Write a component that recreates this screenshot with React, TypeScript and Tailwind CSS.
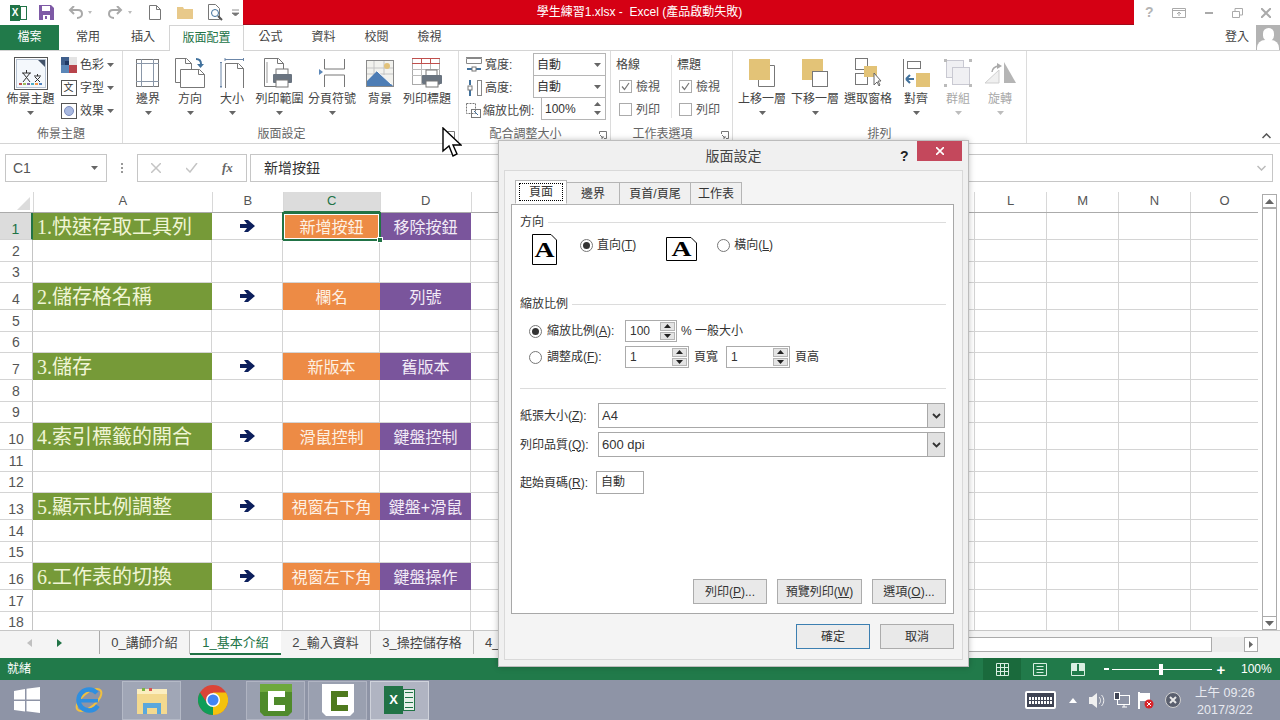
import type { ReactNode } from "react"

const FONT = "font-['Liberation_Sans','Noto_Sans_CJK_TC',sans-serif]"

const colWidths = [179, 71, 97, 91, 72, 72, 72, 72, 72, 72, 72, 72, 72, 72, 68]
const colNames = ["A", "B", "C", "D", "E", "F", "G", "H", "I", "J", "K", "L", "M", "N", "O"]
// E to K sit behind the dialog
const hiddenCols = ["E", "F", "G", "H", "I", "J", "K"]

// row number -> [A, C, D]
const sections: Record<number, string[]> = {
  1: ["1.快速存取工具列", "新增按鈕", "移除按鈕"],
  4: ["2.儲存格名稱", "欄名", "列號"],
  7: ["3.儲存", "新版本", "舊版本"],
  10: ["4.索引標籤的開合", "滑鼠控制", "鍵盤控制"],
  13: ["5.顯示比例調整", "視窗右下角", "鍵盤+滑鼠"],
  16: ["6.工作表的切換", "視窗左下角", "鍵盤操作"],
}

const rowHeight = (n: number) => (n % 3 === 1 ? 27 : n % 3 === 2 ? 22 : 21)

function Caret({ light }: { light?: boolean }) {
  return (
    <svg width="7" height="4" viewBox="0 0 7 4" className="shrink-0">
      <path d="M0 0h7L3.500 4z" fill={light ? "#bdbdbd" : "#666"} />
    </svg>
  )
}

function Large({ w, label, icon, dim, noCaret }: { w: number; label: string; icon: ReactNode; dim?: boolean; noCaret?: boolean }) {
  return (
    <div className="flex flex-col items-center pt-[3px]" style={{ width: w }}>
      <div className="h-[38px] flex items-center justify-center">{icon}</div>
      <div className={`h-[14px] leading-[14px] text-[12px] whitespace-nowrap ${dim ? "text-[#a8a8a8]" : "text-[#444]"}`}>{label}</div>
      {!noCaret && (
        <div className="h-[14px] flex items-center">
          <Caret light={dim} />
        </div>
      )}
    </div>
  )
}

function Group({ label, width, children, launcher }: { label: string; width: number; children: ReactNode; launcher?: boolean }) {
  return (
    <div className="relative flex flex-col h-full border-r border-[#dcdcdc]" style={{ width }}>
      <div className="flex-1 flex min-h-0">{children}</div>
      <div className={`h-[19px] text-center text-[12px] leading-[20px] text-[#666] whitespace-nowrap ${launcher ? "pr-[18px]" : ""}`}>{label}</div>
      {launcher && (
        <svg width="8" height="8" viewBox="0 0 8 8" className="absolute right-[3px] bottom-[4px]">
          <path d="M.5 3V.5h7v7H5M1 4l3 3M4 5v2H2" fill="none" stroke="#777" />
        </svg>
      )}
    </div>
  )
}

function Page({ x, y, w, h }: { x: number; y: number; w: number; h: number }) {
  return <path d={`M${x + .5} ${y + .5}h${w - 6}l5 5v${h - 5}h-${w - 1}z M${x + w - 6.5} ${y + .5}v5h6`} fill="#fff" stroke="#777" />
}

const icons = {
  theme: (
    <svg width="34" height="33" viewBox="0 0 34 33">
      <rect x=".5" y=".5" width="33" height="32" fill="#fff" stroke="#555" />
      <rect x="2.5" y="2.5" width="29" height="28" fill="#f4f8fc" stroke="#b8c4d4" />
      <path d="M24 3h7v7z" fill="#44546a" />
      <path d="M8 16h9M12.5 13v3M9 16l7 9M16 16l-7 9M20 19h7M23.5 17v2M21 20l5 5M26 20l-5 5" stroke="#333" fill="none" />
      <path d="M5 26h3v2H5z" fill="#c0504d" /><path d="M9 26h3v2H9z" fill="#9bbb59" /><path d="M13 26h3v2h-3z" fill="#8064a2" />
      <path d="M17 26h3v2h-3z" fill="#4bacc6" /><path d="M21 26h3v2h-3z" fill="#f79646" /><path d="M25 26h3v2h-3z" fill="#4f81bd" />
    </svg>
  ),
  margins: (
    <svg width="24" height="28" viewBox="0 0 24 28" fill="none" stroke="#777">
      <rect x=".5" y=".5" width="22" height="27" />
      <path d="M5.500 0v28M17.500 0v28M0 4.500h23M0 22.500h23" stroke="#8a97a8" />
    </svg>
  ),
  orient: (
    <svg width="30" height="30" viewBox="0 0 30 30">
      <Page x={0} y={0} w={17} h={24} />
      <Page x={5} y={11} w={25} h={18} />
      <path d="M21 1c3 0 5 2 5 5" fill="none" stroke="#41719c" strokeWidth="2" />
      <path d="M22 6h7l-3.500 4z" fill="#41719c" />
    </svg>
  ),
  size: (
    <svg width="24" height="30" viewBox="0 0 24 30">
      <path d="M5 1.500h19M5 0v3M23.500 0v3M1 4v26M0 4.500h2M0 28.500h2" stroke="#6b86a8" fill="none" />
      <Page x={5} y={5} w={19} h={25} />
    </svg>
  ),
  printArea: (
    <svg width="31" height="30" viewBox="0 0 31 30">
      <Page x={0} y={0} w={20} h={28} />
      <path d="M3 4v21" stroke="#999" />
      <rect x="12" y="11" width="12" height="6" fill="#fff" stroke="#777" />
      <rect x="9" y="16" width="19" height="9" rx="1" fill="#6a7480" />
      <rect x="12" y="22" width="12" height="7" fill="#fff" stroke="#777" />
    </svg>
  ),
  breaks: (
    <svg width="26" height="30" viewBox="0 0 26 30" fill="none" stroke="#777">
      <path d="M5.500 1v10h20V1M5.500 29V17h20v12" />
      <path d="M0 11l4 3-4 3z" fill="#5b87b8" stroke="none" />
    </svg>
  ),
  background: (
    <svg width="28" height="27" viewBox="0 0 28 27">
      <rect x=".5" y=".5" width="27" height="26" fill="#f2f2ee" stroke="#8a8a8a" />
      <path d="M1 8h26M1 14h26M8 1v14M18 1v14" stroke="#c4c4c4" />
      <circle cx="21" cy="6" r="3" fill="#e2c27a" />
      <path d="M1 26v-5l10-10 12 11 4 4z" fill="#4d7db5" />
      <path d="M11 11l14 13" stroke="#fff" />
    </svg>
  ),
  printTitles: (
    <svg width="31" height="30" viewBox="0 0 31 30">
      <rect x=".5" y=".5" width="27" height="26" fill="#fff" stroke="#aaa" />
      <path d="M0 .5h28M0 5.500h28M9.500 0v6M18.500 0v6" stroke="#c0504d" />
      <path d="M0 11.500h28M0 17.500h28M9.500 6v21M18.500 6v21" stroke="#bbb" />
      <rect x="14" y="12" width="11" height="6" fill="#fff" stroke="#777" />
      <rect x="10" y="17" width="20" height="9" rx="1" fill="#6a7480" />
      <rect x="14" y="23" width="12" height="6" fill="#fff" stroke="#777" />
    </svg>
  ),
  forward: (
    <svg width="26" height="28" viewBox="0 0 26 28">
      <path d="M21 6.500h4.500v21h-16V21" fill="none" stroke="#777" />
      <rect x="0" y="0" width="21" height="21" fill="#e3c377" />
    </svg>
  ),
  backward: (
    <svg width="26" height="28" viewBox="0 0 26 28">
      <rect x="0" y="0" width="21" height="21" fill="#e3c377" />
      <rect x="10.500" y="12.500" width="15" height="15" fill="#fff" stroke="#777" />
    </svg>
  ),
  pane: (
    <svg width="27" height="30" viewBox="0 0 27 30">
      <rect x=".5" y=".5" width="12" height="11" fill="#fff" stroke="#777" />
      <rect x=".5" y="15.500" width="12" height="11" fill="#fff" stroke="#777" />
      <rect x="9" y="8" width="13" height="11" fill="#e3c377" />
      <path d="M19 15v12l3-3 2 4 1-1-2-4h3z" fill="#fff" stroke="#666" />
    </svg>
  ),
  align: (
    <svg width="27" height="28" viewBox="0 0 27 28">
      <path d="M.5 0v28" stroke="#777" />
      <rect x="4.500" y="2.500" width="13" height="7" fill="#fff" stroke="#777" />
      <rect x="13" y="14" width="14" height="14" fill="#e3c377" />
      <path d="M3 20h8M3 20l4-4M3 20l4 4" stroke="#41719c" strokeWidth="2" fill="none" />
    </svg>
  ),
  group: (
    <svg width="28" height="28" viewBox="0 0 28 28" fill="none" stroke="#c9c9d2">
      <rect x="2.500" y="1.500" width="17" height="17" fill="#f0f0f3" />
      <rect x="8.500" y="8.500" width="17" height="17" fill="#f0f0f3" />
      <path d="M0 0h3v3H0zM25 0h3v3h-3zM0 25h3v3H0zM25 25h3v3h-3z" fill="#bbb" stroke="none" />
    </svg>
  ),
  rotate: (
    <svg width="31" height="22" viewBox="0 0 31 22">
      <path d="M0 21l14-13v13z" fill="#f0f0f0" stroke="#cfcfcf" />
      <path d="M19 0l12 21H19z" fill="#b5b5b5" />
      <path d="M7 10c0-3 3-6 7-6" fill="none" stroke="#aaa" strokeWidth="1.500" />
      <path d="M12 1l5 3-5 3z" fill="#aaa" />
    </svg>
  ),
}

function SmallRow({ icon, label }: { icon: ReactNode; label: string }) {
  return (
    <div className="h-[23px] flex items-center gap-[3px]">
      <div className="w-[17px] h-[17px] flex items-center justify-center">{icon}</div>
      <span className="text-[12px] text-[#444]">{label}</span>
      <Caret />
    </div>
  )
}

function Combo({ w, value, spin }: { w: number; value: string; spin?: boolean }) {
  return (
    <div className="h-[23px] bg-white border border-[#b5b5b5] flex items-center justify-between pl-[3px] pr-[4px] text-[12px] text-[#333] -mt-px first:mt-0" style={{ width: w }}>
      <span>{value}</span>
      {spin ? (
        <svg width="7" height="15" viewBox="0 0 7 15">
          <path d="M0 5h7L3.500 1zM0 10h7l-3.500 4z" fill="#666" />
        </svg>
      ) : (
        <Caret />
      )}
    </div>
  )
}

function Check({ on, label }: { on?: boolean; label: string }) {
  return (
    <div className="h-[23px] flex items-center gap-[4px] text-[12px] text-[#555]">
      <div className="w-[13px] h-[13px] border border-[#ababab] bg-white flex items-center justify-center">
        {on && (
          <svg width="9" height="9" viewBox="0 0 9 9">
            <path d="M1 4.500l2.500 3L8 1" fill="none" stroke="#777" strokeWidth="1.200" />
          </svg>
        )}
      </div>
      {label}
    </div>
  )
}

function Ribbon() {
  return (
    <div className="h-[94px] shrink-0 bg-white border-y border-[#d4d4d4] flex">
      <Group label="佈景主題" width={123}>
        <div className="pl-[4px]">
          <Large w={53} label="佈景主題" icon={icons.theme} />
        </div>
        <div className="pl-[3px] pt-[2px]">
          <SmallRow
            label="色彩"
            icon={
              <svg width="16" height="16" viewBox="0 0 16 16">
                <path d="M0 0h8v8H0z" fill="#3f5f8c" /><path d="M8 0h8v8H8z" fill="#e4e4e4" />
                <path d="M0 8h8v8H0z" fill="#5b87b8" /><path d="M8 8h8v8H8z" fill="#b8444c" />
                <path d="M4 4h4v4H4z" fill="#1f3864" />
              </svg>
            }
          />
          <SmallRow
            label="字型"
            icon={
              <div className="w-[16px] h-[16px] border border-[#555] text-[10px] leading-[14px] text-center text-[#333] bg-white">文</div>
            }
          />
          <SmallRow
            label="效果"
            icon={
              <div className="w-[16px] h-[16px] border border-[#555] bg-white flex items-center justify-center">
                <div className="w-[10px] h-[10px] rounded-full bg-[#a9b9e0] border border-[#7f8fc0]" />
              </div>
            }
          />
        </div>
      </Group>
      <Group label="版面設定" width={336} launcher>
        <div className="w-[4px]" />
        <Large w={42} label="邊界" icon={icons.margins} />
        <Large w={42} label="方向" icon={icons.orient} />
        <Large w={42} label="大小" icon={icons.size} />
        <Large w={53} label="列印範圍" icon={icons.printArea} />
        <Large w={52} label="分頁符號" icon={icons.breaks} />
        <Large w={44} label="背景" icon={icons.background} noCaret />
        <Large w={50} label="列印標題" icon={icons.printTitles} noCaret />
      </Group>
      <Group label="配合調整大小" width={152} launcher>
        <div className="flex w-full pl-[7px] pt-[2px]">
          <div className="w-[67px]">
            <div className="h-[23px] flex items-center gap-[2px] text-[12px] text-[#444]">
              <svg width="17" height="16" viewBox="0 0 17 16" fill="none">
                <path d="M.5 1.500h15v5h-15zM0 .5h16" stroke="#888" />
                <path d="M1 12h5M10 12h5" stroke="#41719c" strokeWidth="2" /><rect x="6" y="10" width="4" height="4" stroke="#777" />
              </svg>
              寬度:
            </div>
            <div className="h-[23px] flex items-center gap-[2px] text-[12px] text-[#444]">
              <svg width="17" height="16" viewBox="0 0 17 16" fill="none">
                <rect x="11.500" y=".5" width="4" height="15" stroke="#888" />
                <path d="M4 0v5M4 10v6" stroke="#41719c" strokeWidth="2" /><rect x="2" y="6" width="4" height="4" stroke="#777" />
              </svg>
              高度:
            </div>
            <div className="h-[23px] flex items-center gap-[2px] text-[12px] text-[#444] whitespace-nowrap">
              <svg width="15" height="15" viewBox="0 0 15 15" fill="none" className="shrink-0">
                <rect x=".5" y=".5" width="9" height="10" stroke="#777" strokeDasharray="2 1" />
                <rect x="5.500" y="6.500" width="9" height="8" stroke="#777" />
                <path d="M8 8l4 4" stroke="#41719c" />
              </svg>
              縮放比例:
            </div>
          </div>
          <div className="flex flex-col items-end">
            <Combo w={73} value="自動" />
            <Combo w={73} value="自動" />
            <Combo w={65} value="100%" spin />
          </div>
        </div>
      </Group>
      <Group label="工作表選項" width={122} launcher>
        <div className="flex pl-[6px] pt-[4px] w-full">
          <div className="w-[55px] border-r border-[#e2e2e2] mb-[6px]">
            <div className="h-[20px] text-[12px] leading-[20px] text-[#444] -ml-[1px]">格線</div>
            <div className="pl-[2px]"><Check on label="檢視" /><Check label="列印" /></div>
          </div>
          <div className="pl-[5px]">
            <div className="h-[20px] text-[12px] leading-[20px] text-[#444]">標題</div>
            <div className="pl-[2px]"><Check on label="檢視" /><Check label="列印" /></div>
          </div>
        </div>
      </Group>
      <Group label="排列" width={294}>
        <div className="w-[3px]" />
        <Large w={52} label="上移一層" icon={icons.forward} />
        <Large w={54} label="下移一層" icon={icons.backward} />
        <Large w={52} label="選取窗格" icon={icons.pane} noCaret />
        <Large w={44} label="對齊" icon={icons.align} />
        <Large w={40} label="群組" icon={icons.group} dim />
        <Large w={44} label="旋轉" icon={icons.rotate} dim />
      </Group>
      <div className="flex-1 flex items-end justify-end pr-[9px] pb-[4px]">
        <svg width="9" height="6" viewBox="0 0 9 6">
          <path d="M.5 5l4-4 4 4" fill="none" stroke="#555" strokeWidth="1.500" />
        </svg>
      </div>
    </div>
  )
}

function TitleBar() {
  return (
    <div className="h-[25px] shrink-0 flex bg-white">
      <div className="w-[243px] flex items-center relative">
        <div className="ml-[10px] w-[17px] h-[16px] flex">
          <div className="w-[10px] h-[16px] bg-[#217346] text-white text-[10px] font-bold leading-[16px] text-center">X</div>
          <div className="w-[7px] h-[14px] mt-[1px] border border-[#217346] bg-white" />
        </div>
        <svg width="15" height="15" viewBox="0 0 15 15" className="ml-[12px]">
          <path d="M0 0h12l3 3v12H0z" fill="#7e5aa6" /><path d="M3 1h8v5H3z" fill="#fff" /><path d="M4 10h7v5H4z" fill="#fff" /><path d="M6 11h2v3H6z" fill="#7e5aa6" />
        </svg>
        <svg width="15" height="13" viewBox="0 0 15 13" className="ml-[14px]" fill="none" stroke="#a9a9a9" strokeWidth="2">
          <path d="M3 4h7c3 0 4 2 4 4s-2 4-5 4" /><path d="M6 0L2 4l4 4" />
        </svg>
        <svg width="4" height="3" viewBox="0 0 4 3" className="ml-[5px]"><path d="M0 0h4L2 3z" fill="#bbb" /></svg>
        <svg width="15" height="13" viewBox="0 0 15 13" className="ml-[16px]" fill="none" stroke="#a9a9a9" strokeWidth="2">
          <path d="M12 4H5C2 4 1 6 1 8s2 4 5 4" /><path d="M9 0l4 4-4 4" />
        </svg>
        <svg width="4" height="3" viewBox="0 0 4 3" className="ml-[5px]"><path d="M0 0h4L2 3z" fill="#bbb" /></svg>
        <svg width="12" height="15" viewBox="0 0 12 15" className="ml-[17px]">
          <path d="M.5.5h7l4 4v10H.5zM7.500.5v4h4" fill="#fff" stroke="#777" />
        </svg>
        <svg width="17" height="13" viewBox="0 0 17 13" className="ml-[16px]">
          <path d="M0 1h6l1 2h9v10H0z" fill="#e8c98a" />
        </svg>
        <svg width="15" height="17" viewBox="0 0 15 17" className="ml-[14px]" fill="none">
          <path d="M.5.5h7l4 4v11H.5z" stroke="#777" /><circle cx="7" cy="9" r="3.500" stroke="#41719c" /><path d="M10 12l4 4" stroke="#555" strokeWidth="2" />
        </svg>
        <svg width="7" height="7" viewBox="0 0 7 7" className="ml-[9px]"><path d="M0 1h7M0 4h7L3.500 7z" stroke="#777" fill="#777" strokeWidth=".8" /></svg>
      </div>
      <div className="w-[891px] bg-[#d50014] border-b border-[#a00a1a] text-white text-[12px] leading-[24px] text-center pr-[98px] whitespace-pre">學生練習1.xlsx -  Excel (產品啟動失敗)</div>
      <div className="flex-1 flex items-center text-[#b4b4b4]">
        <span className="ml-[11px] w-[10px] text-[14px] font-bold">?</span>
        <svg width="14" height="10" viewBox="0 0 14 10" className="ml-[17px]" fill="none" stroke="#aaa"><path d="M.5.5h13v9H.5zM0 2.500h14M7 8V4M5 6l2-2 2 2" /></svg>
        <div className="ml-[19px] w-[8px] h-[2px] bg-[#aaa]" />
        <svg width="11" height="10" viewBox="0 0 11 10" className="ml-[19px]" fill="none" stroke="#aaa"><path d="M.5 3.500h7v6h-7zM3 3V.5h7.500V7H8" /></svg>
        <svg width="10" height="10" viewBox="0 0 10 10" className="ml-[18px]" fill="none" stroke="#aaa" strokeWidth="2"><path d="M0 0l10 10M10 0L0 10" /></svg>
      </div>
    </div>
  )
}

function Tabs() {
  const tab = "text-[12px] text-[#444] text-center leading-[25px]"
  return (
    <div className="h-[26px] shrink-0 flex bg-transparent relative -mb-px z-10">
      <div className="w-[59px] h-[25px] bg-[#217a4a] text-white text-[12px] text-center leading-[25px]">檔案</div>
      <div className={`w-[58px] ${tab}`}>常用</div>
      <div className={`w-[52px] ${tab}`}>插入</div>
      <div className="w-[75px] bg-white border-x border-t border-[#d4d4d4] text-[#217346] text-[12px] text-center leading-[24px]">版面配置</div>
      <div className={`w-[53px] ${tab}`}>公式</div>
      <div className={`w-[53px] ${tab}`}>資料</div>
      <div className={`w-[53px] ${tab}`}>校閱</div>
      <div className={`w-[53px] ${tab}`}>檢視</div>
      <div className="flex-1" />
      <div className="text-[12px] text-[#444] leading-[25px] mr-[7px]">登入</div>
      <div className="w-[24px] h-[25px] bg-[#b3b3b3] overflow-hidden flex flex-col items-center">
        <div className="w-[11px] h-[13px] mt-[3px] rounded-full bg-white shrink-0" />
        <div className="w-[22px] h-[12px] -mt-[1px] rounded-t-[8px] bg-white shrink-0" />
      </div>
    </div>
  )
}

function FormulaBar() {
  return (
    <div className="h-[48px] shrink-0 bg-white pt-[10px] pl-[5px] flex text-[#444]">
      <div className="w-[102px] h-[28px] border border-[#c6c6c6] flex items-center justify-between pl-[7px] pr-[8px] text-[14px] text-[#555]">
        C1
        <Caret />
      </div>
      <div className="w-[30px] flex flex-col items-center justify-center gap-[2px] h-[28px]">
        <div className="w-[2px] h-[2px] bg-[#999]" /><div className="w-[2px] h-[2px] bg-[#999]" /><div className="w-[2px] h-[2px] bg-[#999]" />
      </div>
      <div className="w-[110px] h-[28px] border border-[#c6c6c6] flex items-center pl-[13px] mr-[3px]">
        <svg width="10" height="10" viewBox="0 0 10 10" stroke="#c4c4c4" strokeWidth="1.500" fill="none"><path d="M0 0l10 10M10 0L0 10" /></svg>
        <svg width="12" height="10" viewBox="0 0 12 10" stroke="#c4c4c4" strokeWidth="1.500" fill="none" className="ml-[25px]"><path d="M0 5l4 4 7-9" /></svg>
        <span className="ml-[24px] text-[13px] italic font-bold font-['Liberation_Serif'] text-[#666]">fx</span>
      </div>
      <div className="w-[1023px] h-[28px] border border-[#c6c6c6] flex items-center justify-between pl-[13px] pr-[6px] text-[14px] text-[#333]">
        新增按鈕
        <svg width="9" height="6" viewBox="0 0 9 6"><path d="M.5 1l4 4 4-4" fill="none" stroke="#bbb" strokeWidth="1.500" /></svg>
      </div>
    </div>
  )
}

function NavyArrow() {
  return (
    <svg width="15" height="12" viewBox="0 0 15 12">
      <path d="M0 4h7L4 0h4l7 6-7 6H4l3-4H0z" fill="#0c1f5c" />
    </svg>
  )
}

function Grid() {
  const rows = Array.from({ length: 18 }, (_, i) => i + 1)
  return (
    <div className="flex-1 min-h-0 flex bg-white overflow-hidden">
      <div className="w-[1258px] shrink-0 overflow-hidden">
        <div className="h-[21px] flex border-b border-[#ababab]">
          <div className="w-[33px] flex items-end justify-end pr-[3px] pb-[2px]">
            <svg width="13" height="13" viewBox="0 0 13 13"><path d="M13 0v13H0z" fill="#dcdcdc" /></svg>
          </div>
          {colNames.map((c, i) => (
            <div
              key={c}
              style={{ width: colWidths[i] }}
              className={`text-center text-[13px] leading-[18px] text-[#555] border-l border-[#d8d8d8] ${c === "C" ? "bg-[#dcdcdc] text-[#217346] border-b-2 border-b-[#217346] h-[21px]" : ""}`}
            >
              {hiddenCols.includes(c) ? null : c}
            </div>
          ))}
        </div>
        {rows.map((n) => {
          const sec = sections[n]
          return (
            <div key={n} className="flex" style={{ height: rowHeight(n) }}>
              <div className={`w-[33px] shrink-0 text-[14px] leading-[18px] text-center flex items-end justify-center pb-[1px] border-b border-[#d4d4d4] ${n === 1 ? "bg-[#dcdcdc] text-[#217346] border-r-2 border-r-[#217346]" : "text-[#555] border-r border-r-[#c4c4c4]"}`}>{n}</div>
              {colNames.map((c, i) => {
                const w = colWidths[i]
                const base = "shrink-0 border-b border-r border-[#d4d4d4] relative"
                if (sec && c === "A")
                  return (
                    <div key={c} style={{ width: w }} className="shrink-0 bg-[#769a38] text-[#f0f5d5] text-[20px] leading-[27px] pl-[4px] pt-[1px] whitespace-nowrap font-['Liberation_Serif','Noto_Sans_CJK_TC',serif] border-r border-[#769a38]">{sec[0]}</div>
                  )
                if (sec && c === "B")
                  return (
                    <div key={c} style={{ width: w }} className={`${base} flex items-center justify-center`}><NavyArrow /></div>
                  )
                if (sec && c === "C")
                  return (
                    <div key={c} style={{ width: w }} className="shrink-0 relative bg-[#ed8b45] text-[#fdf1e4] text-[16px] leading-[27px] pt-[1px] text-center whitespace-nowrap">
                      {sec[1]}
                      {n === 1 && (
                        <>
                          <div className="absolute -left-px -top-px -right-px -bottom-px border-2 border-[#217346] outline outline-1 -outline-offset-3 outline-white" />
                          <div className="absolute -right-[3px] -bottom-[3px] w-[6px] h-[6px] bg-[#217346] border border-white z-10" />
                        </>
                      )}
                    </div>
                  )
                if (sec && c === "D")
                  return (
                    <div key={c} style={{ width: w }} className="shrink-0 bg-[#7a559c] text-[#f3ecf7] text-[16px] leading-[27px] pt-[1px] text-center whitespace-nowrap">{sec[2]}</div>
                  )
                return <div key={c} style={{ width: w }} className={base} />
              })}
            </div>
          )
        })}
      </div>
      <div className="flex-1 pl-[4px] pr-[3px] pt-[2px] flex flex-col">
        <div className="flex-1 border border-[#ababab] flex flex-col justify-between">
          <div className="h-[14px] border-b-2 border-[#ababab] flex items-center justify-center">
            <svg width="9" height="5" viewBox="0 0 9 5"><path d="M0 5h9L4.500 0z" fill="#666" /></svg>
          </div>
          <div className="h-[13px] border-t border-[#ababab] flex items-center justify-center">
            <svg width="9" height="5" viewBox="0 0 9 5"><path d="M0 0h9L4.500 5z" fill="#666" /></svg>
          </div>
        </div>
      </div>
    </div>
  )
}

function SheetTabs() {
  const tab = "h-[23px] leading-[24px] text-[13px] text-[#444] text-center whitespace-nowrap border-r border-[#bdbdbd]"
  return (
    <div className="h-[28px] shrink-0 bg-[#f4f4f4] border-t border-[#c6c6c6] flex">
      <div className="w-[100px] h-[23px] flex items-center border-r border-[#aaa]">
        <svg width="5" height="8" viewBox="0 0 5 8" className="ml-[27px]"><path d="M5 0v8L0 4z" fill="#c0c0c0" /></svg>
        <svg width="5" height="8" viewBox="0 0 5 8" className="ml-[25px]"><path d="M0 0v8l5-4z" fill="#217346" /></svg>
      </div>
      <div className={`w-[90px] ${tab}`}>0_講師介紹</div>
      <div className="w-[91px] h-[24px] leading-[24px] text-[13px] text-[#217346] text-center bg-white border-b-2 border-[#217346] whitespace-nowrap">1_基本介紹</div>
      <div className={`w-[90px] ${tab}`}>2_輸入資料</div>
      <div className={`w-[103px] ${tab}`}>3_操控儲存格</div>
      <div className="pl-[11px] h-[23px] leading-[24px] text-[13px] text-[#444] w-[494px]">4_</div>
      <div className="w-[244px] h-[15px] mt-[6px] bg-white border border-[#ababab]" />
      <div className="w-[32px] h-[15px] mt-[6px] bg-[#ececec]" />
      <div className="w-[14px] h-[15px] mt-[6px] bg-white border border-[#ababab] flex items-center justify-center">
        <svg width="4" height="7" viewBox="0 0 4 7"><path d="M0 0v7l4-3.500z" fill="#666" /></svg>
      </div>
    </div>
  )
}

function StatusBar() {
  return (
    <div className="h-[22px] shrink-0 bg-[#217a4a] text-white flex items-center">
      <div className="pl-[7px] text-[12px] w-[983px]">就緒</div>
      <div className="w-[38px] h-[22px] bg-[#1a6a3c] flex items-center justify-center">
        <svg width="13" height="13" viewBox="0 0 13 13" fill="none" stroke="#d9efe2"><path d="M.5.5h12v12H.5zM4.500 0v13M8.500 0v13M0 4.500h13M0 8.500h13" /></svg>
      </div>
      <svg width="14" height="13" viewBox="0 0 14 13" fill="none" stroke="#d9efe2" className="ml-[12px]"><path d="M.5.5h13v12H.5zM3.500 3.500h7M3.500 6.500h7M3.500 9.500h7" /></svg>
      <svg width="14" height="13" viewBox="0 0 14 13" className="ml-[24px]"><path d="M.5.5h13v12H.5z" fill="none" stroke="#d9efe2" /><path d="M1 1h5v7H1zM8 1h5v7H8z" fill="#d9efe2" /></svg>
      <div className="ml-[19px] w-[5px] h-[2px] bg-white" />
      <div className="ml-[3px] w-[100px] h-[1px] bg-white relative">
        <div className="absolute left-[47px] -top-[5px] w-[4px] h-[11px] bg-white" />
      </div>
      <div className="ml-[3px] text-[15px] font-bold leading-none w-[12px] text-center">+</div>
      <div className="ml-[14px] text-[12px] font-['Liberation_Sans']">100%</div>
    </div>
  )
}

function Taskbar() {
  return (
    <div className="h-[40px] shrink-0 bg-[#8e94a6] flex items-center relative">
      <svg width="26" height="26" viewBox="0 0 26 26" className="ml-[14px]">
        <path d="M0 4l11-2v10.500H0zM12.500 1.800L26 0v12.500H12.500zM0 14h11v10.500L0 23zM12.500 14H26v12l-13.500-1.800z" fill="#fff" />
      </svg>
      <svg width="32" height="32" viewBox="0 0 32 32" className="ml-[33px]">
        <ellipse cx="16" cy="16" rx="15" ry="7" transform="rotate(-40 16 16)" fill="none" stroke="#f0c040" strokeWidth="2" />
        <circle cx="16" cy="16" r="10.500" fill="none" stroke="#2f8fe0" strokeWidth="4.500" strokeDasharray="52 14" strokeDashoffset="-6" />
        <path d="M7 15h18v3.500H7z" fill="#2f8fe0" />
      </svg>
      <div className="ml-[17px] w-[59px] h-[39px] bg-[#a0a6b6] border border-[#b4b9c6] flex items-center justify-center">
        <svg width="32" height="30" viewBox="0 0 32 30">
          <path d="M1 4h30v25H1z" fill="#f3d98f" /><path d="M1 4h30v5H1z" fill="#fbeec0" />
          <path d="M7 18h18v11h-4v-6H11v6H7z" fill="#5ba8dc" />
          <path d="M6 3h3v3H6z" fill="#7cb342" /><path d="M13 3h3v3h-3z" fill="#d9534f" />
        </svg>
      </div>
      <svg width="30" height="30" viewBox="0 0 30 30" className="ml-[17px]">
        <circle cx="15" cy="15" r="15" fill="#db4437" />
        <path d="M15 30a15 15 0 0 0 13-22.500H15z" fill="#f4c20d" />
        <path d="M15 30a15 15 0 0 1-13-22.500L9 18l6 4z" fill="#0f9d58" />
        <circle cx="15" cy="15" r="7" fill="#fff" />
        <circle cx="15" cy="15" r="5.500" fill="#4285f4" />
      </svg>
      <div className="ml-[18px] w-[59px] h-[39px] bg-[#9aa0b0] border border-[#b0b4c2] flex items-center justify-center">
        <svg width="32" height="32" viewBox="0 0 32 32">
          <path d="M0 0h32v28l-4 4H4l-4-4z" fill="#4f8a2a" /><path d="M0 0h32v8H0z" fill="#6ea83c" />
          <path d="M8 7h17v6H14v8h11v6H8z" fill="#fff" />
        </svg>
      </div>
      <div className="ml-[3px] w-[59px] h-[39px] bg-[#9aa0b0] border border-[#b0b4c2] flex items-center justify-center">
        <svg width="32" height="32" viewBox="0 0 32 32">
          <path d="M0 0h32v28l-4 4H4l-4-4z" fill="#fff" />
          <path d="M9 7h17v6H15v8h11v6H9z" fill="#4f7a1e" />
        </svg>
      </div>
      <div className="ml-[3px] w-[59px] h-[39px] bg-[#b0b4c2] border border-[#cfd2db] flex items-center justify-center">
        <div className="flex items-center">
          <div className="w-[19px] h-[28px] bg-[#217346] text-white text-[13px] font-bold leading-[28px] text-center">X</div>
          <div className="w-[12px] h-[22px] border border-[#217346] bg-[#e6efe9] flex flex-col justify-around px-[1px]">
            <div className="h-[1px] bg-[#217346]" /><div className="h-[1px] bg-[#217346]" /><div className="h-[1px] bg-[#217346]" /><div className="h-[1px] bg-[#217346]" />
          </div>
        </div>
      </div>
      <div className="ml-[596px] w-[31px] h-[18px] border-2 border-white rounded-[2px] bg-[#3f4454] flex flex-col justify-center gap-[1px] px-[2px]">
        <div className="h-[3px] bg-[repeating-linear-gradient(90deg,#fff_0_2px,transparent_2px_3px)]" />
        <div className="h-[3px] bg-[repeating-linear-gradient(90deg,#fff_0_2px,transparent_2px_3px)]" />
      </div>
      <svg width="8" height="5" viewBox="0 0 8 5" className="ml-[13px]"><path d="M0 5h8L4 0z" fill="#fff" /></svg>
      <svg width="16" height="15" viewBox="0 0 16 15" className="ml-[12px]">
        <path d="M0 4h3l5-4v15l-5-4H0z" fill="#f0f0f0" /><path d="M10 4c2 2 2 5 0 7M12.500 2c3 3 3 8 0 11" fill="none" stroke="#f0f0f0" />
      </svg>
      <svg width="16" height="16" viewBox="0 0 16 16" className="ml-[9px]" fill="none" stroke="#fff">
        <rect x="3.500" y="3.500" width="12" height="9" /><rect x=".5" y=".5" width="5" height="7" fill="#3f4454" /><path d="M8 15h5M10 12v3" />
      </svg>
      <svg width="16" height="17" viewBox="0 0 16 17" className="ml-[8px]">
        <path d="M1 0v17" stroke="#fff" strokeWidth="2" /><path d="M2 1h10v8H2z" fill="#fff" />
        <circle cx="11" cy="12" r="4.500" fill="#d8232a" /><path d="M9 10l4 4M13 10l-4 4" stroke="#fff" />
      </svg>
      <svg width="16" height="16" viewBox="0 0 16 16" className="ml-[11px]">
        <circle cx="8" cy="8" r="7.500" fill="#5a5f6e" stroke="#d0d0d0" /><path d="M5 5l6 6M11 5l-6 6" stroke="#e8e8e8" strokeWidth="2" />
      </svg>
      <div className="ml-[14px] pt-[3px] text-[12.500px] leading-[17px] text-[#e8eaf0] text-center whitespace-nowrap font-['Liberation_Sans','Noto_Sans_CJK_TC',sans-serif]">
        <div>上午 09:26</div>
        <div>2017/3/22</div>
      </div>
    </div>
  )
}

function U({ children }: { children: string }) {
  return <span className="underline">{children}</span>
}

function DlgTab({ w, label, active, first }: { w: number; label: string; active?: boolean; first?: boolean }) {
  return (
    <div
      className={`flex items-center justify-center text-[12px] text-[#333] border border-[#b5b5b5] whitespace-nowrap ${first ? "" : "border-l-0"} ${active ? "h-[24px] bg-white border-b-white z-10 -mt-[1px]" : "h-[23px] mt-[1px] bg-[#f0f0f0]"}`}
      style={{ width: w }}
    >
      {active ? <span className="border border-dotted border-black px-[9px] leading-[16px]">{label}</span> : label}
    </div>
  )
}

function Radio({ on }: { on?: boolean }) {
  return (
    <div className="w-[13px] h-[13px] rounded-full border border-[#777] bg-white flex items-center justify-center shrink-0">
      {on && <div className="w-[7px] h-[7px] rounded-full bg-[#333]" />}
    </div>
  )
}

function Spin({ w, value }: { w: number; value: string }) {
  return (
    <div className="h-[22px] bg-white border border-[#ababab] flex items-center justify-between pl-[4px] pr-[1px] text-[12px] text-[#333] shrink-0" style={{ width: w }}>
      {value}
      <div className="w-[15px] h-[18px] flex flex-col gap-[1px]">
        <div className="flex-1 bg-[#e4e4e4] border border-[#b5b5b5] flex items-center justify-center">
          <svg width="7" height="4" viewBox="0 0 7 4"><path d="M0 4h7L3.500 0z" fill="#222" /></svg>
        </div>
        <div className="flex-1 bg-[#e4e4e4] border border-[#b5b5b5] flex items-center justify-center">
          <svg width="7" height="4" viewBox="0 0 7 4"><path d="M0 0h7L3.500 4z" fill="#222" /></svg>
        </div>
      </div>
    </div>
  )
}

function Sel({ value }: { value: string }) {
  return (
    <div className="w-[347px] h-[25px] shrink-0 bg-white border border-[#a8a8a8] flex items-center justify-between pl-[3px] text-[13px] text-[#333] font-['Liberation_Sans']">
      {value}
      <div className="w-[17px] h-[23px] bg-[#e1e1e1] border-l border-[#a8a8a8] flex items-center justify-center">
        <svg width="9" height="6" viewBox="0 0 9 6"><path d="M1 1l3.500 3.500L8 1" fill="none" stroke="#333" strokeWidth="1.800" /></svg>
      </div>
    </div>
  )
}

function Btn({ w, children, primary }: { w: number; children: ReactNode; primary?: boolean }) {
  return (
    <div className={`h-[25px] flex items-center justify-center text-[12px] text-[#333] whitespace-nowrap border ${primary ? "border-[#3c7fb1] bg-[#ececec]" : "border-[#acacac] bg-[#e9e9e9]"}`} style={{ width: w }}>
      {children}
    </div>
  )
}

function Fieldset({ label }: { label: string }) {
  return (
    <div className="flex items-center gap-[4px] h-[14px]">
      <span className="text-[12px] text-[#333] whitespace-nowrap">{label}</span>
      <div className="flex-1 h-px bg-[#dcdcdc]" />
    </div>
  )
}

function PageIcon({ w, h, base }: { w: number; h: number; base: number }) {
  return (
    <svg width={w} height={h} viewBox={`0 0 ${w} ${h}`}>
      <path d={`M.5.5H${w - 6}L${w - .5} 6V${h - .5}H.5z`} fill="#fff" stroke="#000" />
      <text x={w / 2} y={base} fontSize={20} textAnchor="middle" textLength={20} lengthAdjust="spacingAndGlyphs" fontWeight="bold" fontFamily="Liberation Serif" fill="#000">A</text>
    </svg>
  )
}

function Dialog() {
  return (
    <div className="absolute left-[498px] top-[140px] w-[471px] h-[527px] bg-[#f0f0f0] border border-[#bcbcbc] shadow-[0_0_6px_rgba(0,0,0,.25)] z-20 text-[#333]">
      <div className="h-[29px] relative text-center text-[14px] leading-[30px] text-[#444]">
        版面設定
        <span className="absolute left-[401px] top-0 text-[14px] font-bold text-[#222]">?</span>
        <div className="absolute right-[6px] top-0 w-[45px] h-[20px] bg-[#c4485c] flex items-center justify-center">
          <svg width="8" height="8" viewBox="0 0 8 8"><path d="M0 0l8 8M8 0L0 8" stroke="#fff" strokeWidth="1.600" /></svg>
        </div>
      </div>
      <div className="mx-[5px] h-[490px] bg-[#f4f4f4] border border-[#d9d9d9] pl-[6px] pr-[8px] pt-[10px]">
        <div className="flex pl-[4px] relative">
          <DlgTab w={52} label="頁面" active first />
          <DlgTab w={53} label="邊界" />
          <DlgTab w={71} label="頁首/頁尾" />
          <DlgTab w={51} label="工作表" />
        </div>
        <div className="h-[410px] -mt-px bg-white border border-[#a8a8a8] pl-[8px] pr-[7px] pt-[10px] text-[12px]">
          <Fieldset label="方向" />
          <div className="flex items-start h-[65px] mt-[3px]">
            <div className="ml-[12px] mt-[2px]"><PageIcon w={25} h={31} base={23} /></div>
            <div className="ml-[23px] mt-[4px] flex items-center gap-[4px]"><Radio on /><span>直向(<U>T</U>)</span></div>
            <div className="ml-[30px] mt-[5px]"><PageIcon w={31} h={24} base={19} /></div>
            <div className="ml-[20px] mt-[4px] flex items-center gap-[4px]"><Radio /><span>橫向(<U>L</U>)</span></div>
          </div>
          <Fieldset label="縮放比例" />
          <div className="flex items-center h-[22px] mt-[9px] pl-[9px]">
            <Radio on />
            <span className="ml-[5px] w-[78px] whitespace-nowrap">縮放比例(<U>A</U>):</span>
            <Spin w={52} value="100" />
            <span className="ml-[4px] whitespace-nowrap">% 一般大小</span>
          </div>
          <div className="flex items-center h-[22px] mt-[4px] pl-[9px]">
            <Radio />
            <span className="ml-[5px] w-[78px] whitespace-nowrap">調整成(<U>F</U>):</span>
            <Spin w={64} value="1" />
            <span className="ml-[5px] w-[32px]">頁寬</span>
            <Spin w={64} value="1" />
            <span className="ml-[5px]">頁高</span>
          </div>
          <div className="h-px bg-[#dcdcdc] mt-[20px]" />
          <div className="flex items-center h-[25px] mt-[14px]">
            <span className="w-[78px] whitespace-nowrap">紙張大小(<U>Z</U>):</span>
            <Sel value="A4" />
          </div>
          <div className="flex items-center h-[25px] mt-[4px]">
            <span className="w-[78px] whitespace-nowrap">列印品質(<U>Q</U>):</span>
            <Sel value="600 dpi" />
          </div>
          <div className="flex items-center h-[23px] mt-[14px]">
            <span className="w-[76px] whitespace-nowrap">起始頁碼(<U>R</U>):</span>
            <div className="w-[48px] h-[23px] bg-white border border-[#a8a8a8] pl-[4px] leading-[20px]">自動</div>
          </div>
          <div className="flex justify-end gap-[10px] mt-[85px]">
            <Btn w={74}>列印(<U>P</U>)...</Btn>
            <Btn w={85}>預覽列印(<U>W</U>)</Btn>
            <Btn w={74}>選項(<U>O</U>)...</Btn>
          </div>
        </div>
        <div className="flex justify-end gap-[10px] mt-[10px]">
          <Btn w={74} primary>確定</Btn>
          <Btn w={74}>取消</Btn>
        </div>
      </div>
    </div>
  )
}

function MouseCursor() {
  return (
    <svg width="20" height="31" viewBox="0 0 20 31" className="absolute left-[442px] top-[127px] z-30">
      <path d="M1 1v23l6-5 4 10 4-2-4-9h8z" fill="#fff" stroke="#000" strokeWidth="1.400" />
    </svg>
  )
}

export default function App() {
  return (
    <div className={`relative w-[1280px] h-[720px] overflow-hidden bg-white flex flex-col ${FONT}`}>
      <TitleBar />
      <Tabs />
      <Ribbon />
      <FormulaBar />
      <Grid />
      <SheetTabs />
      <StatusBar />
      <Taskbar />
      <Dialog />
      <MouseCursor />
    </div>
  )
}
